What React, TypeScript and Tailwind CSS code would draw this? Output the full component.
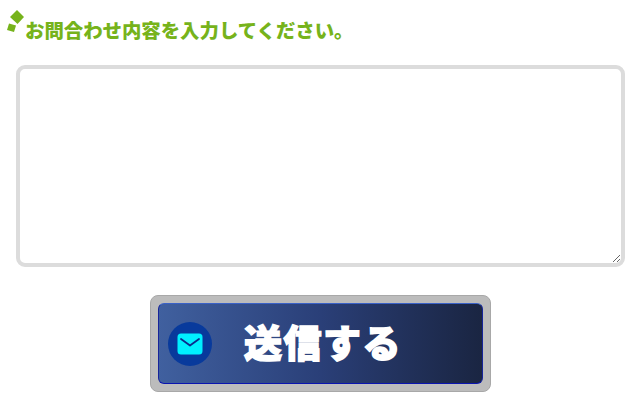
export default function App() {
  return (
    <div className="w-[640px] h-[402px] bg-white overflow-hidden font-['Noto_Sans_CJK_JP',sans-serif]">
      <div className="flex items-end pl-[7px] pt-[10px] h-[42px]">
        <svg width="18" height="24" viewBox="0 0 18 24" className="shrink-0 mb-[8px]">
          <polygon points="10,0 17,7 10.5,14 3,7" fill="#76b31b" />
          <polygon points="2,13.5 9,15.5 7,22 0,20" fill="#76b31b" />
        </svg>
        <h1 className="text-[19.4px] leading-[24px] font-black text-[#76b31b] whitespace-nowrap">
          お問合わせ内容を入力してください。
        </h1>
      </div>
      <div className="px-[16px] pt-[23px]">
        <textarea className="block w-[609px] h-[202px] border-[4px] border-[#dcdcdc] rounded-[9px] bg-white outline-none" />
      </div>
      <div className="flex justify-center pt-[28px]">
        <div className="w-[341px] h-[97px] ml-[1px] p-[7px] bg-[#bcbcbc] border border-[#a8a8a8] rounded-[8px]">
          <button className="flex items-center w-full h-full rounded-[6px] border border-[#16249a] border-t-[#3a62c8] border-b-[#0a14b0] bg-gradient-to-r from-[#40609f] via-[#2a3f78] to-[#1a2542]">
            <span className="flex items-center justify-center w-[44px] h-[44px] ml-[9px] rounded-full bg-[#083a9c] shrink-0">
              <svg width="26" height="22" viewBox="0 0 26 22">
                <rect x="0.5" y="0.5" width="25" height="21" rx="3.5" fill="#00f0ff" />
                <path d="M4 6 L13 12.5 L22 6" fill="none" stroke="#0a2a8c" strokeWidth="1.8" strokeLinecap="round" strokeLinejoin="round" />
              </svg>
            </span>
            <span className="ml-[32px] mb-[5px] text-[38px] leading-none font-black text-white tracking-[1.5px] [-webkit-text-stroke:1.5px_white] whitespace-nowrap">
              送信する
            </span>
          </button>
        </div>
      </div>
    </div>
  );
}
